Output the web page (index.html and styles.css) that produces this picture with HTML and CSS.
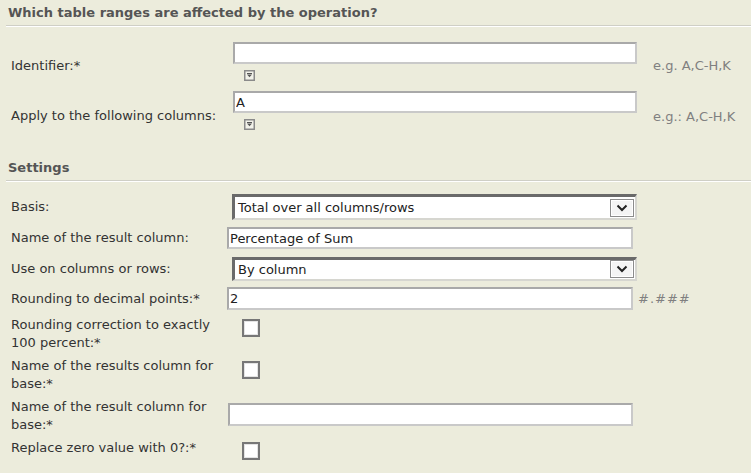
FILE: index.html
```html
<!DOCTYPE html>
<html>
<head>
<meta charset="utf-8">
<link rel="stylesheet" href="styles.css">
</head>
<body>
<div class="page">
  <div class="section-title">Which table ranges are affected by the operation?</div>
  <div class="ranges">
    <div class="range-row">
      <div class="label shift-a">Identifier:*</div>
      <div class="range-control">
        <input class="text wide" type="text" value="">
        <svg class="picker" width="11" height="11" viewBox="0 0 11 11"><rect x="0.75" y="0.75" width="9.5" height="9.5" fill="#f2f2ea" stroke="#8a8a8a" stroke-width="1.5"/><rect x="3" y="3" width="5" height="1" fill="#555"/><path d="M3 4.6h5l-2.5 2.6z" fill="#555"/></svg>
      </div>
      <div class="hint shift-a">e.g. A,C-H,K</div>
    </div>
    <div class="range-row second">
      <div class="label shift-b">Apply to the following columns:</div>
      <div class="range-control">
        <input class="text wide" type="text" value="A">
        <svg class="picker" width="11" height="11" viewBox="0 0 11 11"><rect x="0.75" y="0.75" width="9.5" height="9.5" fill="#f2f2ea" stroke="#8a8a8a" stroke-width="1.5"/><rect x="3" y="3" width="5" height="1" fill="#555"/><path d="M3 4.6h5l-2.5 2.6z" fill="#555"/></svg>
      </div>
      <div class="hint shift-b">e.g.: A,C-H,K</div>
    </div>
  </div>

  <div class="section-title settings-title">Settings</div>
  <div class="settings">
    <div class="row r-basis">
      <div class="label">Basis:</div>
      <div class="select">
        <span class="select-text">Total over all columns/rows</span>
        <span class="select-btn"><svg width="12" height="8" viewBox="0 0 12 8"><path d="M1.5 1.5 6 6l4.5-4.5" fill="none" stroke="#222" stroke-width="2"/></svg></span>
      </div>
    </div>
    <div class="row r-name">
      <div class="label">Name of the result column:</div>
      <input class="text field" type="text" value="Percentage of Sum">
    </div>
    <div class="row r-use">
      <div class="label">Use on columns or rows:</div>
      <div class="select">
        <span class="select-text">By column</span>
        <span class="select-btn"><svg width="12" height="8" viewBox="0 0 12 8"><path d="M1.5 1.5 6 6l4.5-4.5" fill="none" stroke="#222" stroke-width="2"/></svg></span>
      </div>
    </div>
    <div class="row r-round">
      <div class="label">Rounding to decimal points:*</div>
      <input class="text field" type="text" value="2">
      <div class="hint fmt">#.###</div>
    </div>
    <div class="row two">
      <div class="label">Rounding correction to exactly<br>100 percent:*</div>
      <span class="check c1"></span>
    </div>
    <div class="row two">
      <div class="label">Name of the results column for<br>base:*</div>
      <span class="check c2"></span>
    </div>
    <div class="row two">
      <div class="label">Name of the result column for<br>base:*</div>
      <input class="text field f3" type="text" value="">
    </div>
    <div class="row two last">
      <div class="label">Replace zero value with 0?:*</div>
      <span class="check c3"></span>
    </div>
  </div>
</div>
</body>
</html>
```

FILE: styles.css
```css
html, body {
  margin: 0;
  padding: 0;
  background: #ececdc;
}
body {
  font-family: "DejaVu Sans", sans-serif;
  font-size: 13px;
  color: #333;
  width: 751px;
  height: 473px;
  overflow: hidden;
}
.page {
  padding-left: 6px;
}
.section-title {
  height: 25px;
  line-height: 25px;
  padding-left: 2px;
  font-weight: bold;
  color: #555;
  border-bottom: 1px solid #cfcfc6;
  box-shadow: 0 1px 0 #ffffff;
}
.ranges {
  padding-top: 16px;
}
.range-row {
  display: flex;
  align-items: center;
}
.range-row.second {
  margin-top: 10px;
}
.label {
  width: 216px;
  padding-left: 5px;
  white-space: nowrap;
  line-height: 18px;
  flex: none;
}
.shift-a { padding-top: 8px; }
.shift-b { padding-top: 11px; }
.range-control {
  display: flex;
  flex-direction: column;
  margin-left: 6px;
}
.picker {
  margin-top: 6px;
  margin-left: 11px;
  display: block;
}
.text {
  box-sizing: border-box;
  height: 22px;
  border: 2px solid;
  border-color: #a9a9a9 #c9c9c9 #c9c9c9 #a9a9a9;
  background: #fff;
  font-family: inherit;
  font-size: 13px;
  color: #222;
  padding: 0 1px;
  margin: 0;
  outline: none;
}
.text.wide {
  width: 404px;
}
.hint {
  color: #808080;
  margin-left: 16px;
}
.settings-title {
  margin-top: 25px;
}
.settings {
  padding-top: 13px;
}
.row {
  display: flex;
  align-items: center;
}
.r-basis { height: 26px; margin-bottom: 7px; }
.r-name { height: 22px; margin-bottom: 8px; }
.r-use { height: 23px; margin-bottom: 7px; }
.r-round { height: 23px; margin-bottom: 6px; }
.row.two {
  align-items: flex-start;
  height: 36px;
  margin-bottom: 5px;
}
.field {
  width: 406px;
  height: 23px;
}
.r-name .field { height: 22px; }
.select {
  box-sizing: border-box;
  margin-left: 5px;
  width: 405px;
  height: 24px;
  background: #fff;
  border-top: 3px solid #6a6a6a;
  border-left: 3px solid #6a6a6a;
  border-right: 2px solid #d6d6d0;
  border-bottom: 2px solid #d6d6d0;
  display: flex;
  align-items: center;
  justify-content: space-between;
}
.r-basis .select { height: 26px; }
.select-text {
  padding-left: 3px;
  color: #222;
}
.select-btn {
  box-sizing: border-box;
  width: 24px;
  height: 18px;
  margin-right: 1px;
  border: 1px solid #8c8c8c;
  background: #f4f4f4;
  box-shadow: inset 0 0 0 1px #ffffff;
  display: flex;
  align-items: center;
  justify-content: center;
}
.fmt {
  margin-left: 5px;
  letter-spacing: 1px;
}
.check {
  box-sizing: border-box;
  width: 18px;
  height: 18px;
  margin-left: 15px;
  border: 2px solid #777;
  background: #fff;
  box-shadow: inset 0 0 0 1px #e4e4e4;
  flex: none;
}
.c1 { margin-top: 3px; }
.c2 { margin-top: 4px; }
.c3 { margin-top: 3px; }
.f3 { margin-top: 5px; height: 23px; width: 405px; margin-left: 1px; }
```
